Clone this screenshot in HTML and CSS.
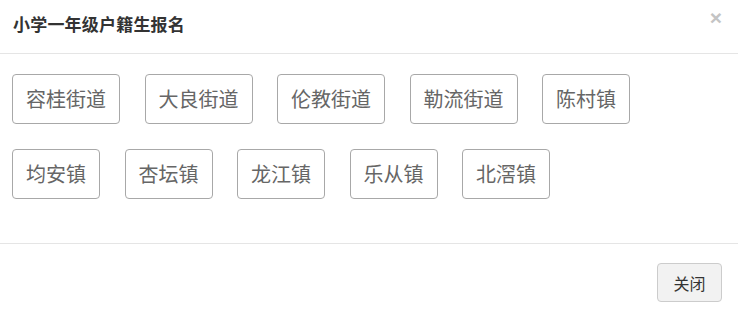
FILE: index.html
```html
<!DOCTYPE html>
<html lang="zh-CN">
<head>
<meta charset="utf-8">
<title>小学一年级户籍生报名</title>
<link rel="stylesheet" href="styles.css">
</head>
<body>
<div class="modal">
  <div class="modal-header">
    <h4 class="modal-title">小学一年级户籍生报名</h4>
    <span class="close">×</span>
  </div>
  <div class="modal-body">
    <a class="area">容桂街道</a>
    <a class="area">大良街道</a>
    <a class="area">伦教街道</a>
    <a class="area">勒流街道</a>
    <a class="area">陈村镇</a>
    <a class="area">均安镇</a>
    <a class="area">杏坛镇</a>
    <a class="area">龙江镇</a>
    <a class="area">乐从镇</a>
    <a class="area">北滘镇</a>
  </div>
  <div class="modal-footer">
    <button class="btn">关闭</button>
  </div>
</div>
</body>
</html>
```

FILE: styles.css
```css
* { box-sizing: border-box; }
html, body {
  margin: 0;
  padding: 0;
  background: #fff;
  font-family: "Noto Sans CJK SC", "Noto Sans", sans-serif;
}
.modal {
  width: 738px;
}
.modal-header {
  height: 54px;
  border-bottom: 1px solid #e5e5e5;
  display: flex;
  align-items: center;
  justify-content: space-between;
  padding: 0 16px 0 13px;
}
.modal-title {
  margin: 0;
  font-size: 17px;
  font-weight: bold;
  letter-spacing: 0.2px;
  color: #333;
  line-height: 24px;
  margin-top: -6px;
}
.close {
  font-size: 21px;
  font-weight: bold;
  color: #c4c4c4;
  line-height: 1;
  margin-top: -19px;
  font-family: "Liberation Sans", sans-serif;
}
.modal-body {
  padding: 20px 0 19px 12px;
  display: flex;
  flex-wrap: wrap;
  column-gap: 24.5px;
  row-gap: 25px;
  border-bottom: 1px solid #e5e5e5;
}
.modal-body::after {
  content: "";
  flex-basis: 100%;
  height: 0;
}
.area {
  display: inline-block;
  height: 50px;
  padding: 0 13px;
  border: 1px solid #a8a8a8;
  border-radius: 4px;
  font-size: 20px;
  line-height: 48px;
  color: #666;
  cursor: pointer;
}
.area:nth-child(5) { margin-right: 80px; }
.modal-footer {
  display: flex;
  justify-content: flex-end;
  padding: 19px 16px 16px;
}
.btn {
  height: 39px;
  width: 65px;
  padding: 0;
  font-family: inherit;
  font-size: 16px;
  color: #333;
  background: #f2f2f2;
  border: 1px solid #ccc;
  border-radius: 4px;
}
```
